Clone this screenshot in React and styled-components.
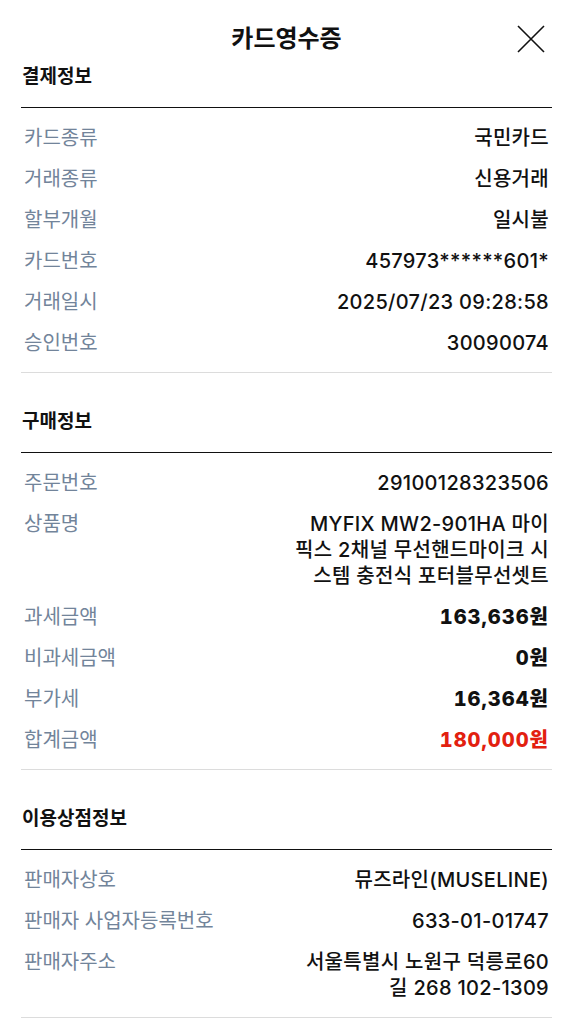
import React from 'react';
import styled, { createGlobalStyle } from 'styled-components';

// GLOBAL //
const GlobalStyle = createGlobalStyle`
  body {
    margin: 0;
    background: #fff;
    font-family: "Inter", "Noto Sans CJK KR", sans-serif;
    color: #111;
  }
`;

// STYLED COMPONENTS //
const Page = styled.div`
  width: 573px;
  padding: 0 21px;
  box-sizing: border-box;
`;

const Header = styled.header`
  display: grid;
  grid-template-columns: 1fr auto 1fr;
  align-items: center;
  height: 64px;
  padding-top: 14px;
  box-sizing: border-box;
`;

const Title = styled.h1`
  grid-column: 2;
  margin: 0;
  font-size: 24px;
  font-weight: 700;
  line-height: 32px;
`;

const CloseButton = styled.button`
  grid-column: 3;
  justify-self: end;
  margin-right: 6px;
  width: 30px;
  height: 30px;
  padding: 0;
  border: 0;
  background: none;
  display: flex;
  align-items: center;
  justify-content: center;
`;

const Section = styled.section`
  padding-top: ${(p) => (p.$first ? '0' : '36px')};
`;

const SectionTitle = styled.h2`
  margin: 0;
  padding: 0 1px 17px;
  font-size: 19px;
  font-weight: 700;
  line-height: 26px;
  border-bottom: 1px solid #111;
`;

const List = styled.dl`
  margin: 0;
  padding: 17px 3px 16px;
  display: flex;
  flex-direction: column;
  gap: 15px;
  border-bottom: 1px solid #dcdcdc;
`;

const Row = styled.div`
  display: flex;
  justify-content: space-between;
  align-items: flex-start;
`;

const Label = styled.dt`
  font-size: 20px;
  line-height: 26px;
  color: #72849a;
  white-space: nowrap;
`;

const Value = styled.dd`
  margin: 0;
  max-width: 254px;
  text-align: right;
  font-size: 20px;
  line-height: 26px;
  letter-spacing: 0.3px;
  font-weight: 500;
  color: #111;

  ${(p) =>
    p.$bold &&
    `
    font-weight: 800;
    letter-spacing: 1px;
    font-variant-numeric: tabular-nums;
  `}

  ${(p) => p.$red && `color: #e2200f;`}
`;

const CloseIcon = () => (
  <svg width="28" height="28" viewBox="0 0 28 28" fill="none">
    <path d="M1 1L27 27M27 1L1 27" stroke="#111" strokeWidth="1.6" />
  </svg>
);

const payment = [
  ['카드종류', '국민카드'],
  ['거래종류', '신용거래'],
  ['할부개월', '일시불'],
  ['카드번호', '457973******601*'],
  ['거래일시', '2025/07/23 09:28:58'],
  ['승인번호', '30090074'],
];

const purchase = [
  ['주문번호', '29100128323506'],
  ['상품명', 'MYFIX MW2-901HA 마이픽스 2채널 무선핸드마이크 시스템 충전식 포터블무선셋트'],
  ['과세금액', '163,636원', 'bold'],
  ['비과세금액', '0원', 'bold'],
  ['부가세', '16,364원', 'bold'],
  ['합계금액', '180,000원', 'red'],
];

const store = [
  ['판매자상호', '뮤즈라인(MUSELINE)'],
  ['판매자 사업자등록번호', '633-01-01747'],
  ['판매자주소', '서울특별시 노원구 덕릉로60길 268 102-1309'],
];

function InfoSection({ title, rows, first }) {
  return (
    <Section $first={first}>
      <SectionTitle>{title}</SectionTitle>
      <List>
        {rows.map(([label, value, kind]) => (
          <Row key={label}>
            <Label>{label}</Label>
            <Value $bold={kind === 'bold' || kind === 'red'} $red={kind === 'red'}>
              {value}
            </Value>
          </Row>
        ))}
      </List>
    </Section>
  );
}

export default function App() {
  return (
    <>
      <GlobalStyle />
      <Page>
        <Header>
          <Title>카드영수증</Title>
          <CloseButton aria-label="닫기">
            <CloseIcon />
          </CloseButton>
        </Header>
        <InfoSection first title="결제정보" rows={payment} />
        <InfoSection title="구매정보" rows={purchase} />
        <InfoSection title="이용상점정보" rows={store} />
      </Page>
    </>
  );
}
